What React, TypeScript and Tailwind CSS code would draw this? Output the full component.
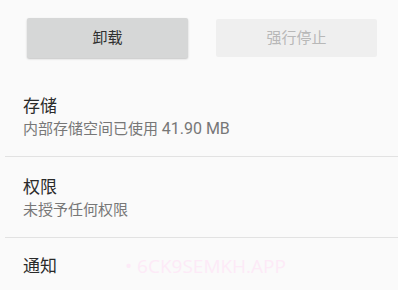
import React from "react";

const font = {
  fontFamily: 'Roboto, "Noto Sans CJK SC", sans-serif',
};

function Row({ title, children }: { title: string; children?: React.ReactNode }) {
  return (
    <>
      <p className="text-[17px] leading-[22px] text-[#2a2a2a]">{title}</p>
      {children && (
        <p className="mt-[2px] text-[15px] leading-[20px] text-[#777777]">{children}</p>
      )}
    </>
  );
}

export default function App() {
  return (
    <div className="flex h-[290px] w-[407px] overflow-hidden bg-white" style={font}>
      <div className="relative h-full w-[398px] bg-[#fafafa]">
        {/* action buttons */}
        <div className="flex gap-[28px] pl-[27px] pt-[18px]">
          <button className="flex h-[40px] w-[161px] items-center justify-center rounded-[2px] bg-[#d6d7d7] text-[15px] text-[#303030] shadow-[0_1px_2px_rgba(0,0,0,0.22)]">
            卸载
          </button>
          <button className="mt-[1px] flex h-[38px] w-[161px] items-center justify-center rounded-[2px] bg-[#efefef] text-[15px] text-[#b8b8b8]">
            强行停止
          </button>
        </div>

        {/* storage */}
        <div className="pb-[17px] pl-[23px] pt-[37px]">
          <Row title="存储">
            内部存储空间已使用 <span className="text-[16px]">41.90 MB</span>
          </Row>
        </div>
        <div className="ml-[5px] h-px bg-[#e2e2e2]" />

        {/* permissions */}
        <div className="pb-[17px] pl-[23px] pt-[19px]">
          <Row title="权限">未授予任何权限</Row>
        </div>
        <div className="ml-[5px] h-px bg-[#e2e2e2]" />

        {/* notifications */}
        <div className="relative pl-[23px] pt-[17px]">
          <Row title="通知" />
          <span
            className="absolute left-[125px] top-[15px] text-[19px] leading-[26px] text-[#fdeaf7]"
            style={{ fontFamily: '"Open Sans", "Noto Sans", sans-serif' }}
          >
            • 6CK9SEMKH.APP
          </span>
        </div>
      </div>
    </div>
  );
}
